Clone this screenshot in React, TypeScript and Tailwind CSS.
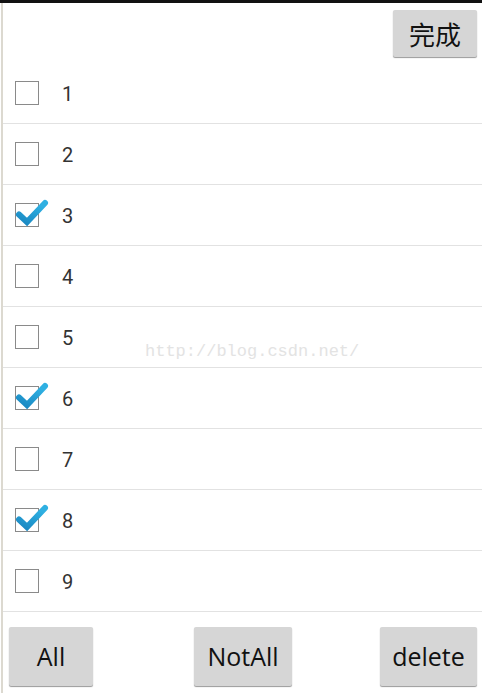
import { useState } from 'react';

const ITEMS = ['1', '2', '3', '4', '5', '6', '7', '8', '9'];

const CheckBox = ({ checked }: { checked: boolean }) => (
  <div className="relative w-[24px] h-[24px] border border-[#8a8a8a] bg-white shrink-0">
    {checked && (
      <svg
        className="absolute -left-[1px] -top-[1px] overflow-visible"
        width="24"
        height="24"
        viewBox="0 0 24 24"
      >
        <defs>
          <linearGradient id="chk" x1="0" y1="1" x2="0.6" y2="0">
            <stop offset="0" stopColor="#1a88c2" />
            <stop offset="1" stopColor="#2fb0e2" />
          </linearGradient>
        </defs>
        <path d="M4 11.5 L12 19 L30 0" fill="none" stroke="url(#chk)" strokeWidth="6" strokeLinejoin="miter" strokeLinecap="round" />
      </svg>
    )}
  </div>
);

const GrayButton = ({ label, className }: { label: string; className: string }) => (
  <button
    className={`bg-[#d6d6d6] rounded-[2px] shadow-[0_1px_1px_rgba(0,0,0,0.4)] text-[#111] shrink-0 ${className}`}
  >
    {label}
  </button>
);

export default function App() {
  const [checked, setChecked] = useState<Record<string, boolean>>({ '3': true, '6': true, '8': true });

  return (
    <div className="w-[482px] h-[693px] bg-white flex flex-col overflow-hidden">
      {/* status bar strip */}
      <div className="h-[3px] bg-[#121212] shrink-0" />

      <div className="flex-1 flex flex-col ml-px border-l-2 border-[#dcd9d0]">
        {/* header */}
        <div className="h-[60px] flex justify-end items-start pt-[7px] pr-[5px] shrink-0">
          <GrayButton
            label="完成"
            className="w-[84px] h-[47px] text-[26px] leading-none [font-family:'Noto_Sans_CJK_SC',sans-serif]"
          />
        </div>

        {/* list */}
        <div className="relative flex flex-col">
          {ITEMS.map((n) => (
            <div
              key={n}
              onClick={() => setChecked((c) => ({ ...c, [n]: !c[n] }))}
              className="h-[61px] flex items-center border-b border-[#e2e2e2] pl-[12px]"
            >
              <CheckBox checked={!!checked[n]} />
              <span className="ml-[23px] text-[20px] text-[#333] [font-family:Roboto,sans-serif] mt-[2px]">
                {n}
              </span>
            </div>
          ))}
          <div className="absolute left-[142px] top-[276px] text-[17px] text-[#e3e3e3] [font-family:'Liberation_Mono',monospace] pointer-events-none">
            http://blog.csdn.net/
          </div>
        </div>

        {/* bottom buttons */}
        <div className="flex items-start pt-[15px] pl-[6px] pr-[5px]">
          <GrayButton label="All" className="w-[84px] h-[59px] text-[25px] [font-family:'Open_Sans',sans-serif]" />
          <GrayButton label="NotAll" className="ml-[101px] w-[98px] h-[59px] text-[25px] [font-family:'Open_Sans',sans-serif]" />
          <GrayButton label="delete" className="ml-auto w-[97px] h-[59px] text-[25px] [font-family:'Open_Sans',sans-serif]" />
        </div>
      </div>
    </div>
  );
}
